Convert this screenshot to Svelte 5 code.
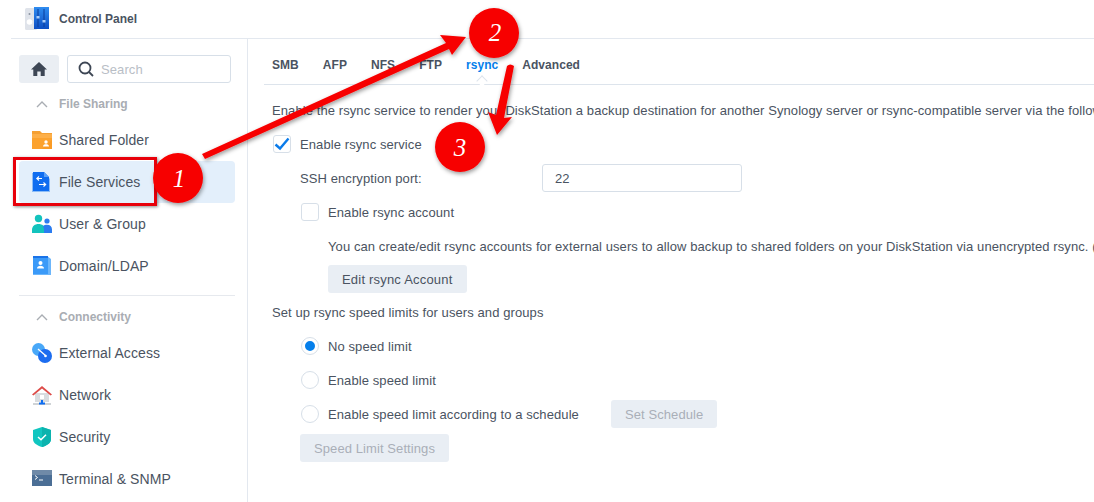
<script>
	const fileSharing = [
		{ name: 'Shared Folder', icon: 'folder' },
		{ name: 'File Services', icon: 'files', active: true },
		{ name: 'User & Group', icon: 'users' },
		{ name: 'Domain/LDAP', icon: 'domain' }
	];
	const connectivity = [
		{ name: 'External Access', icon: 'external' },
		{ name: 'Network', icon: 'network' },
		{ name: 'Security', icon: 'security' },
		{ name: 'Terminal & SNMP', icon: 'terminal' }
	];
	const tabs = ['SMB', 'AFP', 'NFS', 'FTP', 'rsync', 'Advanced'];
</script>

{#snippet navIcon(icon)}
	<svg class="nav-icon" viewBox="0 0 20 20" width="20" height="20">
		{#if icon === 'folder'}
			<path d="M0 1h8l2 2h10v5H0z" fill="#f5a033" />
			<path d="M0 4h20v15H0z" fill="#fca22e" />
			<path d="M0 4h20v4H0z" fill="#fdb75a" opacity="0.6" />
			<path d="M10 19h10V10z" fill="#f79219" opacity="0.4" />
			<circle cx="14" cy="12" r="1.7" fill="#fff" />
			<path d="M11 16.5c0-1.8 1.4-2.3 3-2.3s3 .5 3 2.3z" fill="#fff" />
		{:else if icon === 'files'}
			<path d="M0 1h12l6 6v13H0z" fill="#8dbdf6" />
			<path d="M1 0h11l5 5v14H1z" fill="#0f6df0" />
			<path d="M12 0l5 5h-5z" fill="#5aa0f7" />
			<path d="M10 6.5H5M7 4.5l-2.2 2 2.2 2M7 12.5h6.5M11.500 10.5l2.2 2-2.2 2" fill="none" stroke="#fff" stroke-width="1.100" />
		{:else if icon === 'users'}
			<circle cx="6.500" cy="4.500" r="3.700" fill="#13c3bd" />
			<circle cx="15" cy="7" r="2.600" fill="#2b7cf0" />
			<path d="M0 19v-3c0-4 3-6 6.500-6s6.500 2 6.500 6v3z" fill="#13c3bd" />
			<path d="M12 19v-3c0-2-.5-3-1-4 1-.8 2.500-1.200 4-1.200 3 0 5 1.700 5 4.700V19z" fill="#2b7cf0" />
		{:else if icon === 'domain'}
			<path d="M1 0h14l4 3v16H1z" fill="#6cb6fb" />
			<path d="M1 0h15v18H1z" fill="#3b9af8" />
			<path d="M1 0h15v2H1z" fill="#1a73e8" />
			<circle cx="8.500" cy="7" r="2" fill="#fff" />
			<path d="M5 12.500c0-2 1.600-2.800 3.500-2.800s3.500.8 3.500 2.800z" fill="#fff" />
		{:else if icon === 'external'}
			<circle cx="6.500" cy="6.500" r="6.500" fill="#49a8f8" />
			<circle cx="13" cy="13" r="7" fill="#1c6df0" />
			<path d="M6 6l8 7" stroke="#fff" stroke-width="1.300" />
			<circle cx="13.500" cy="13" r="1.300" fill="#fff" />
		{:else if icon === 'network'}
			<path d="M3 8h14v9H3z" fill="#d9dcdf" />
			<path d="M8 10h4v4H8z" fill="#fff" />
			<path d="M0 9.500L10 1l10 8.500-1.400 1L10 3.500l-8.600 7z" fill="#dd4b48" />
			<path d="M1 19h18" stroke="#bfc4c9" stroke-width="1.500" />
			<path d="M10 15v3M7 18.500h6" stroke="#0f6df0" stroke-width="2" />
		{:else if icon === 'security'}
			<path d="M10 0l9 3v9c0 4-4 6.500-9 8-5-1.500-9-4-9-8V3z" fill="#10c6c0" />
			<path d="M10 0l9 3v9c0 4-4 6.500-9 8z" fill="#0cb3ae" />
			<path d="M6 10l3 2.700 5-5" fill="none" stroke="#fff" stroke-width="1.500" />
		{:else}
			<rect x="0" y="1" width="20" height="16" fill="#4b6e95" />
			<rect x="0" y="1" width="20" height="5" fill="#6f8aa8" />
			<path d="M3 6.500l2.500 2-2.500 2M7 11h4" fill="none" stroke="#fff" stroke-width="1" />
		{/if}
	</svg>
{/snippet}

{#snippet navGroup(title, items)}
	<div class="group-title">
		<svg viewBox="0 0 12 7" width="12" height="7"><path d="M1 6l5-5 5 5" fill="none" stroke="#a9adb3" stroke-width="1.400" /></svg>
		<span>{title}</span>
	</div>
	{#each items as item}
		<div class="nav-item" class:active={item.active}>
			{@render navIcon(item.icon)}
			<span>{item.name}</span>
		</div>
	{/each}
{/snippet}

<div class="window">
	<header>
		<svg viewBox="0 0 24 24" width="24" height="24">
			<defs>
				<linearGradient id="panel" x1="0" y1="0" x2="0" y2="1">
					<stop offset="0" stop-color="#2f8cf0" />
					<stop offset="1" stop-color="#0d4fc4" />
				</linearGradient>
			</defs>
			<rect x="0" y="1" width="12" height="22" rx="1.500" fill="#dfe3ea" />
			<rect x="9" y="0" width="15" height="22" fill="url(#panel)" />
			<circle cx="4.500" cy="15" r="2.800" fill="#fff" />
			<circle cx="4.500" cy="7" r="1" fill="#8b93a0" />
			<path d="M13 2v18M19 2v18" stroke="#0a3d9a" stroke-width="1" />
			<rect x="11.500" y="9" width="3" height="2.500" fill="#a9cdfa" />
			<rect x="17.500" y="13" width="3" height="2.500" fill="#a9cdfa" />
		</svg>
		<span>Control Panel</span>
	</header>

	<div class="body">
		<aside>
			<div class="tools">
				<button class="home" aria-label="Home">
					<svg viewBox="0 0 16 16" width="16" height="16"><path d="M8 1L0 8.500h2.300V15h4V10.500h3.400V15h4V8.500H16z" fill="#3d4654" /></svg>
				</button>
				<div class="search">
					<svg viewBox="0 0 16 16" width="16" height="16"><circle cx="7" cy="7" r="5.500" fill="none" stroke="#3d4654" stroke-width="1.800" /><path d="M11 11l4 4" stroke="#3d4654" stroke-width="1.800" /></svg>
					<span>Search</span>
				</div>
			</div>
			{@render navGroup('File Sharing', fileSharing)}
			<hr />
			{@render navGroup('Connectivity', connectivity)}
		</aside>

		<main>
			<nav>
				{#each tabs as tab}
					<span class="tab" class:current={tab === 'rsync'}>{tab}</span>
				{/each}
			</nav>

			<p class="line intro">Enable the rsync service to render your DiskStation a backup destination for another Synology server or rsync-compatible server via the following</p>

			<div class="row">
				<span class="check">
					<svg viewBox="0 0 16 16" width="16" height="16"><path d="M1.500 8.500l4.500 4 8.500-10" fill="none" stroke="#0a7bea" stroke-width="2.400" /></svg>
				</span>
				Enable rsync service
			</div>

			<div class="indent">
				<div class="row port">
					<span class="port-label">SSH encryption port:</span>
					<span class="input">22</span>
				</div>
				<div class="row"><span class="check"></span>Enable rsync account</div>
				<div class="sub">
					<div class="row">You can create/edit rsync accounts for external users to allow backup to shared folders on your DiskStation via unencrypted rsync. (Only</div>
					<button class="btn edit">Edit rsync Account</button>
				</div>
			</div>

			<p class="line limits">Set up rsync speed limits for users and groups</p>

			<div class="indent radios">
				<div class="row"><span class="radio on"></span>No speed limit</div>
				<div class="row"><span class="radio"></span>Enable speed limit</div>
				<div class="row">
					<span class="radio"></span>Enable speed limit according to a schedule
					<button class="btn off schedule">Set Schedule</button>
				</div>
				<button class="btn off">Speed Limit Settings</button>
			</div>
		</main>
	</div>

	<!-- hand drawn annotations on top of the screenshot -->
	<div class="marker"></div>
	<svg class="arrows" viewBox="0 0 1094 502" width="1094" height="502">
		<defs>
			<filter id="shadow" x="-20%" y="-20%" width="140%" height="140%">
				<feDropShadow dx="1" dy="2" stdDeviation="2" flood-color="#000" flood-opacity="0.4" />
			</filter>
		</defs>
		<g fill="#f70000" filter="url(#shadow)">
			<path d="M202 154L446 43 440 35 466 37 452 55 449 49 205 159z" />
			<path d="M507 66Q510 63 514 66L504 118 512 117 497 135 488 112 496 115z" />
		</g>
		<g fill="#f70000" filter="url(#shadow)">
			<circle cx="178" cy="178" r="25" />
			<circle cx="494" cy="33" r="25" />
			<circle cx="460" cy="147" r="25" />
		</g>
	</svg>
	<span class="num n1">1</span>
	<span class="num n2">2</span>
	<span class="num n3">3</span>
</div>

<style>
	:global(body) {
		margin: 0;
		background: #fff;
	}

	.window {
		position: relative;
		width: 1094px;
		height: 502px;
		overflow: hidden;
		font-family: "Liberation Sans", Arial, sans-serif;
		font-size: 13px;
		letter-spacing: 0.09px;
		color: #4a5361;
	}

	header {
		display: flex;
		align-items: center;
		gap: 10px;
		height: 39px;
		margin-left: 11px;
		padding-left: 14px;
		box-sizing: border-box;
		border-bottom: 1px solid #e3e8ef;
		font-size: 12px;
		font-weight: 700;
		letter-spacing: 0;
	}

	.body {
		display: flex;
		margin-left: 11px;
	}

	aside {
		width: 237px;
		height: 463px;
		box-sizing: border-box;
		border-right: 1px solid #e3e8ef;
		padding: 16px 12px 0 8px;
		flex-shrink: 0;
	}

	.tools {
		display: flex;
		gap: 8px;
	}

	.home {
		display: flex;
		align-items: center;
		justify-content: center;
		width: 40px;
		height: 28px;
		padding: 0;
		border: 0;
		border-radius: 3px;
		background: #eaeef3;
	}

	.search {
		display: flex;
		align-items: center;
		gap: 7px;
		width: 164px;
		height: 28px;
		box-sizing: border-box;
		padding-left: 10px;
		border: 1px solid #d7dfe8;
		border-radius: 3px;
		color: #b9bec6;
	}

	.group-title {
		display: flex;
		align-items: center;
		gap: 11px;
		height: 42px;
		padding-left: 17px;
		margin-top: 0;
		font-size: 12px;
		font-weight: 700;
		letter-spacing: 0;
		color: #a9adb3;
	}

	.nav-item {
		display: flex;
		align-items: center;
		gap: 7px;
		height: 42px;
		padding-left: 13px;
		font-size: 14px;
		letter-spacing: 0.1px;
		border-radius: 4px;
	}

	.group-title + .nav-item {
		margin-top: -6px;
	}

	.nav-item.active {
		background: #e3effb;
	}

	hr {
		height: 1px;
		margin: 8px 0 0;
		border: 0;
		background: #e6e9ee;
	}

	main {
		flex: 1;
		min-width: 0;
		padding: 0 0 0 16px;
	}

	nav {
		display: flex;
		gap: 24px;
		align-items: center;
		height: 46px;
		padding: 0 0 0 8px;
		box-sizing: border-box;
		border-bottom: 1px solid #dde4ec;
		position: relative;
		font-size: 12px;
		font-weight: 700;
		letter-spacing: 0.05px;
	}

	.tab {
		position: relative;
		top: 3px;
	}

	.tab.current {
		color: #057feb;
	}

	.tab.current::after {
		content: "";
		position: absolute;
		left: 50%;
		bottom: -13px;
		width: 7px;
		height: 7px;
		margin-left: -4px;
		background: #fff;
		border-left: 1px solid #dde4ec;
		border-top: 1px solid #dde4ec;
		transform: rotate(45deg);
	}

	.line {
		margin: 0;
		padding-left: 8px;
		white-space: nowrap;
		line-height: 28px;
	}

	.intro {
		margin-top: 12px;
	}

	.row {
		display: flex;
		align-items: center;
		height: 28px;
		margin-top: 6px;
		white-space: nowrap;
	}

	.intro + .row {
		padding-left: 8px;
		margin-top: 5px;
	}

	.check {
		display: flex;
		align-items: center;
		justify-content: center;
		width: 18px;
		height: 18px;
		margin: 0 9px 0 1px;
		box-sizing: border-box;
		border: 1px solid #d7dfe8;
		border-radius: 3px;
		background: #fff;
	}

	.indent {
		padding-left: 36px;
	}

	.port-label {
		width: 242px;
	}

	.input {
		display: flex;
		align-items: center;
		width: 200px;
		height: 28px;
		box-sizing: border-box;
		padding-left: 12px;
		border: 1px solid #d7dfe8;
		border-radius: 3px;
	}

	.sub {
		padding-left: 28px;
	}

	.btn {
		display: block;
		height: 28px;
		padding: 0 14px;
		margin-top: 5px;
		border: 0;
		border-radius: 3px;
		background: #e9eef4;
		color: #4a5361;
		font: inherit;
		letter-spacing: inherit;
	}

	.btn.edit {
		letter-spacing: 0.2px;
	}

	.btn.off {
		color: #a9afb8;
		margin-top: 6px;
	}

	.btn.schedule {
		display: inline-block;
		margin: 0 0 0 32px;
	}

	.limits {
		margin-top: 6px;
	}

	.radios {
		margin-top: 5px;
	}

	.radios > .row:first-child {
		margin-top: 0;
	}

	.radio {
		display: inline-block;
		width: 18px;
		height: 18px;
		margin: 0 9px 0 1px;
		box-sizing: border-box;
		border: 1px solid #d7dfe8;
		border-radius: 50%;
		background: #fff;
	}

	.radio.on {
		border: 4px solid #fff;
		outline: 1px solid #d7dfe8;
		outline-offset: -1px;
		background: #057feb;
	}

	.marker {
		position: absolute;
		left: 13px;
		top: 157px;
		width: 144px;
		height: 49px;
		box-sizing: border-box;
		border: 3px solid #e8000a;
		box-shadow: 1px 1px 3px rgba(0, 0, 0, 0.45);
	}

	.arrows {
		position: absolute;
		left: 0;
		top: 0;
		pointer-events: none;
	}

	.num {
		position: absolute;
		width: 50px;
		text-align: center;
		font-family: "Liberation Serif", serif;
		font-style: italic;
		font-size: 25px;
		line-height: 30px;
		letter-spacing: 0;
		color: #fff;
	}

	.n1 { left: 154px; top: 164px; }
	.n2 { left: 470px; top: 18px; }
	.n3 { left: 435px; top: 133px; }
</style>
